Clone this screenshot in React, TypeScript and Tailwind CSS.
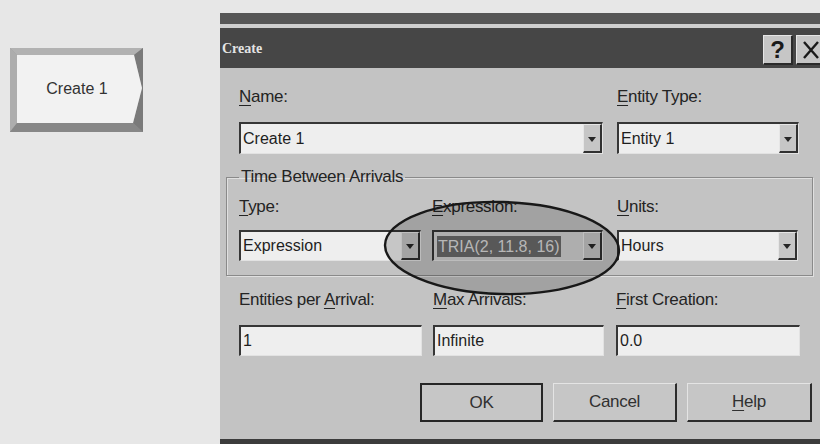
import React from "react";

type Kids = { children?: React.ReactNode };

function U({ children }: Kids) {
  return <span className="underline decoration-1 underline-offset-[3px]">{children}</span>;
}

function Label({ children }: Kids) {
  return (
    <div className="h-5 whitespace-nowrap text-[17px] leading-5 tracking-[-0.3px] text-[#242424]">
      {children}
    </div>
  );
}

function DropArrow() {
  return (
    <div className="flex w-[19px] shrink-0 items-center justify-center border-t border-l border-r-2 border-b-2 border-t-[#e6e6e6] border-l-[#e6e6e6] border-r-[#303030] border-b-[#303030] bg-[#c6c6c6]">
      <svg width="8" height="5" viewBox="0 0 8 5" className="mt-[2px]">
        <path d="M0 0H8L4 5Z" fill="#262626" />
      </svg>
    </div>
  );
}

function Combo({ className, fieldClass, children }: Kids & { className: string; fieldClass?: string }) {
  return (
    <div
      className={
        "flex h-[31px] border-t-2 border-l-2 border-b border-r border-t-[#363636] border-l-[#363636] border-b-[#e2e2e2] border-r-[#e2e2e2] " +
        className
      }
    >
      <div
        className={
          "flex min-w-0 flex-1 items-center whitespace-nowrap pl-[2px] text-[16px] text-[#1e1e1e] " +
          (fieldClass ?? "bg-[#eeeeee]")
        }
      >
        {children}
      </div>
      <DropArrow />
    </div>
  );
}

function TextField({ className, children }: Kids & { className: string }) {
  return (
    <div
      className={
        "flex h-[31px] items-center whitespace-nowrap border-t-2 border-l-2 border-b border-r border-t-[#363636] border-l-[#363636] border-b-[#e2e2e2] border-r-[#e2e2e2] bg-[#eeeeee] pl-[2px] text-[16px] text-[#1e1e1e] " +
        className
      }
    >
      {children}
    </div>
  );
}

function Button({ className, children }: Kids & { className: string }) {
  return (
    <div
      className={
        "flex h-[39px] items-center justify-center bg-[#c6c6c6] text-[17px] tracking-[-0.3px] text-[#303030] " +
        className
      }
    >
      {children}
    </div>
  );
}

function ModuleShape() {
  return (
    <svg width="134" height="85" viewBox="0 0 134 85" className="ml-[10px] mt-[48px]">
      <rect x="0" y="0" width="133" height="84" fill="#9a9a9a" />
      <polygon points="0,0 133,0 124,7 7,7" fill="#b2b2b2" />
      <polygon points="0,0 7,7 7,75 0,84" fill="#adadad" />
      <polygon points="0,84 7,75 123,75 133,84" fill="#878787" />
      <polygon points="133,0 133,84 123,75 132,40 124,7" fill="#7a7a7a" />
      <polygon points="7,7 124,7 132,40 123,75 7,75" fill="#f2f2f2" />
      <text
        x="67"
        y="46"
        textAnchor="middle"
        fontFamily="'Liberation Sans', Arial, sans-serif"
        fontSize="16"
        fill="#333333"
      >
        Create 1
      </text>
    </svg>
  );
}

export default function App() {
  return (
    <div className="flex h-[444px] w-[820px] overflow-hidden bg-[#e7e7e7] font-['Liberation_Sans',Arial,sans-serif]">
      {/* canvas with the flowchart module */}
      <div className="w-[220px] shrink-0">
        <ModuleShape />
      </div>

      {/* dialog window */}
      <div className="flex min-w-0 flex-1 flex-col pt-[13px]">
        <div className="h-[11px] bg-[#565656]" />
        <div className="h-[4px] bg-[#cfcfcf]" />
        <div className="flex h-[40px] items-center bg-[#464646]">
          <span className="pl-[2px] font-['Liberation_Serif',serif] text-[14px] font-bold text-[#e4e4e4]">
            Create
          </span>
          <div className="ml-auto mr-[-6px] flex gap-[3px] self-start pt-[7px]">
            <div className="flex h-[30px] w-[30px] items-center justify-center border-t border-l border-r-2 border-b-2 border-t-[#e6e6e6] border-l-[#e6e6e6] border-r-[#2a2a2a] border-b-[#2a2a2a] bg-[#c6c6c6] text-[24px] font-bold leading-none text-[#1a1a1a]">
              ?
            </div>
            <div className="flex h-[30px] w-[30px] items-center justify-center border-t border-l border-r-2 border-b-2 border-t-[#e6e6e6] border-l-[#e6e6e6] border-r-[#2a2a2a] border-b-[#2a2a2a] bg-[#c6c6c6]">
              <svg width="18" height="18" viewBox="0 0 18 18">
                <path d="M2 1L16 17M16 1L2 17" stroke="#1a1a1a" strokeWidth="2.4" />
              </svg>
            </div>
          </div>
        </div>

        {/* dialog body */}
        <div className="relative flex-1 bg-[#c3c3c3] pl-[19px] pt-[19px]">
          <div className="flex gap-[14px]">
            <div className="w-[364px]">
              <Label>
                <U>N</U>ame:
              </Label>
              <Combo className="mt-[15px] h-[32px]">Create 1</Combo>
            </div>
            <div className="w-[182px]">
              <Label>
                <U>E</U>ntity Type:
              </Label>
              <Combo className="mt-[15px] h-[32px]">Entity 1</Combo>
            </div>
          </div>

          <fieldset className="ml-[-13px] mt-[13px] w-[587px] border border-[#8a8a8a] pb-[14px] pl-[12px] pt-[10px] shadow-[inset_1px_1px_0_#e0e0e0,1px_1px_0_#e0e0e0]">
            <legend className="h-5 px-[2px] text-[17px] leading-5 tracking-[-0.3px] text-[#242424]">
              Time Between Arrivals
            </legend>
            <div className="flex">
              <div className="w-[182px]">
                <Label>
                  <U>T</U>ype:
                </Label>
                <Combo className="mt-[13px]">Expression</Combo>
              </div>
              <div className="ml-[11px] w-[171px]">
                <Label>
                  <U>E</U>xpression:
                </Label>
                <Combo className="mt-[13px]" fieldClass="bg-[#d2d2d2] pl-[3px]">
                  <span className="bg-[#6a6a6a] px-[1px] leading-[21px] text-[#dcdcdc]">TRIA(2, 11.8, 16)</span>
                </Combo>
              </div>
              <div className="ml-[14px] w-[181px]">
                <Label>
                  <U>U</U>nits:
                </Label>
                <Combo className="mt-[13px]">Hours</Combo>
              </div>
            </div>
          </fieldset>

          <div className="mt-[14px] flex">
            <div className="w-[183px]">
              <Label>
                Entities per <U>A</U>rrival:
              </Label>
              <TextField className="mt-[15px]">1</TextField>
            </div>
            <div className="ml-[11px] w-[171px]">
              <Label>
                <U>M</U>ax Arrivals:
              </Label>
              <TextField className="mt-[15px]">Infinite</TextField>
            </div>
            <div className="ml-[12px] w-[184px]">
              <Label>
                <U>F</U>irst Creation:
              </Label>
              <TextField className="mt-[15px]">0.0</TextField>
            </div>
          </div>

          <div className="mt-[27px] flex gap-[10px] pl-[181px]">
            <Button className="w-[123px] border-2 border-[#262626]">OK</Button>
            <Button className="w-[124px] border-t border-l border-r-2 border-b-2 border-t-[#e4e4e4] border-l-[#e4e4e4] border-r-[#2c2c2c] border-b-[#2c2c2c]">
              Cancel
            </Button>
            <Button className="w-[125px] border-t border-l border-r-2 border-b-2 border-t-[#e4e4e4] border-l-[#e4e4e4] border-r-[#2c2c2c] border-b-[#2c2c2c]">
              <U>H</U>elp
            </Button>
          </div>

          {/* hand-drawn ellipse marking the arrival expression */}
          <svg
            width="244"
            height="104"
            viewBox="0 0 244 104"
            className="pointer-events-none absolute left-[160px] top-[128px]"
          >
            <ellipse
              cx="122"
              cy="52"
              rx="117"
              ry="46"
              transform="rotate(1.5 122 52)"
              fill="rgba(0,0,0,0.17)"
              stroke="#181818"
              strokeWidth="2.4"
            />
          </svg>
        </div>
        <div className="h-[5px] bg-[#3c3c3c]" />
      </div>
    </div>
  );
}
